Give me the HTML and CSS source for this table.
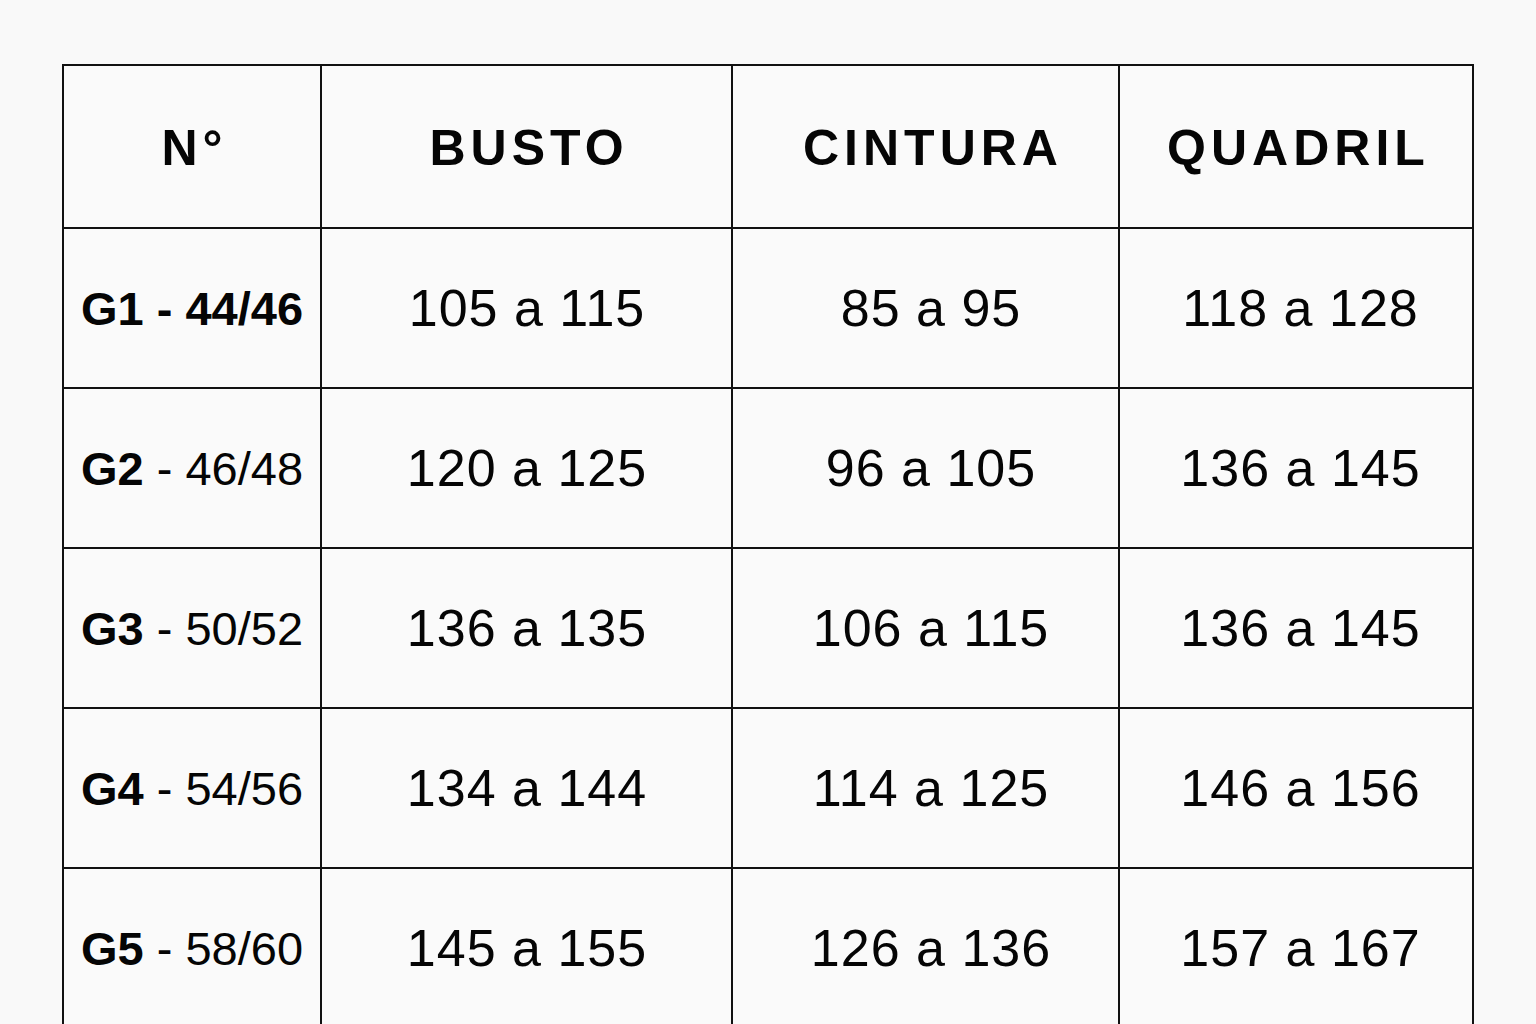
FILE: index.html
```html
<!DOCTYPE html>
<html lang="pt">
<head>
<meta charset="utf-8">
<title>Tabela de medidas</title>
<link rel="stylesheet" href="styles.css">
</head>
<body>
<div class="sheet">
  <div class="grid" role="table">
    <div class="cell head" role="columnheader"><span class="ls">N°</span></div>
    <div class="cell head" role="columnheader"><span class="ls">BUSTO</span></div>
    <div class="cell head c3" role="columnheader"><span class="ls">CINTURA</span></div>
    <div class="cell head" role="columnheader"><span class="ls">QUADRIL</span></div>

    <div class="cell size"><b>G1 - 44/46</b></div>
    <div class="cell val"><span>105 a 115</span></div>
    <div class="cell val c3"><span>85 a 95</span></div>
    <div class="cell val c4"><span>118 a 128</span></div>

    <div class="cell size"><b>G2</b>&nbsp;- 46/48</div>
    <div class="cell val"><span>120 a 125</span></div>
    <div class="cell val c3"><span>96 a 105</span></div>
    <div class="cell val c4"><span>136 a 145</span></div>

    <div class="cell size"><b>G3</b>&nbsp;- 50/52</div>
    <div class="cell val"><span>136 a 135</span></div>
    <div class="cell val c3"><span>106 a 115</span></div>
    <div class="cell val c4"><span>136 a 145</span></div>

    <div class="cell size"><b>G4</b>&nbsp;- 54/56</div>
    <div class="cell val"><span>134 a 144</span></div>
    <div class="cell val c3"><span>114 a 125</span></div>
    <div class="cell val c4"><span>146 a 156</span></div>

    <div class="cell size"><b>G5</b>&nbsp;- 58/60</div>
    <div class="cell val"><span>145 a 155</span></div>
    <div class="cell val c3"><span>126 a 136</span></div>
    <div class="cell val c4"><span>157 a 167</span></div>
  </div>
</div>
</body>
</html>
```
FILE: styles.css
```css
html, body {
  margin: 0;
  padding: 0;
  background: #f9f9f9;
  overflow: hidden;
}
body {
  font-family: "Liberation Sans", Arial, sans-serif;
  color: #050505;
}
.sheet {
  padding: 64px 0 0 62px;
}
.grid {
  display: grid;
  grid-template-columns: 258px 411px 387px 354px;
  grid-template-rows: 163px repeat(5, 160px);
  width: max-content;
  border-left: 2px solid #111;
  border-top: 2px solid #111;
  background: #fafafa;
}
.cell {
  box-sizing: border-box;
  border-right: 2px solid #111;
  border-bottom: 2px solid #111;
  display: flex;
  align-items: center;
  justify-content: center;
  white-space: nowrap;
}
.head {
  font-weight: 700;
  font-size: 50px;
  letter-spacing: 5px;
  padding-top: 2px;
}
.head .ls {
  margin-right: -5px;
}
.val {
  font-size: 52px;
  letter-spacing: 1px;
}
.val span {
  margin-right: -1px;
}
.c3 {
  padding-left: 10px;
}
.c4 {
  padding-left: 8px;
}
.size {
  font-size: 47px;
}
.size b {
  font-weight: 700;
}
```
